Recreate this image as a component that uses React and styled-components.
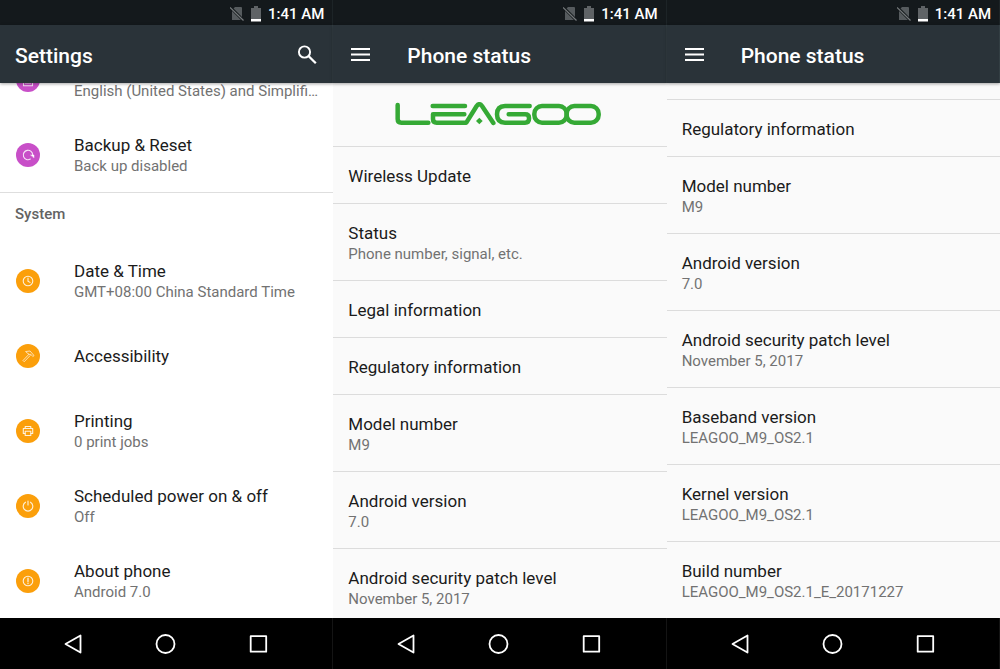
import React from "react";
import styled, { createGlobalStyle } from "styled-components";

const GlobalStyle = createGlobalStyle`
  * { box-sizing: border-box; }
  body {
    margin: 0;
    background: #000;
    font-family: Roboto, "Liberation Sans", sans-serif;
  }
  button {
    font: inherit;
    color: inherit;
    border: 0;
    padding: 0;
    background: none;
    cursor: pointer;
  }
`;

const Screens = styled.main`
  display: grid;
  grid-template-columns: repeat(3, minmax(0, 1fr));
  height: 100vh;
`;

const Phone = styled.section`
  display: flex;
  flex-direction: column;
  min-width: 0;
  min-height: 0;
  background: ${(p) => p.$surface};
`;

const StatusBar = styled.div`
  display: flex;
  flex: none;
  align-items: center;
  justify-content: flex-end;
  height: 25px;
  padding: 2px 8px 0 0;
  background: #14191c;
  border-right: 1px solid #1d2427;
  color: #fff;
  font-size: 15px;
  font-weight: 500;
  line-height: 20px;

  svg { margin-right: 7px; }
`;

const AppBar = styled.header`
  position: relative;
  display: flex;
  flex: none;
  align-items: center;
  height: 58px;
  padding: 2px 15px 0;
  background: #2a3339;
  border-right: 1px solid #333e43;
  box-shadow: 0 1px 3px rgba(0, 0, 0, 0.35);
  color: #fff;
`;

const Title = styled.h1`
  flex: 1;
  margin: 0;
  padding-top: 2px;
  font-size: 21px;
  font-weight: 500;
  line-height: 24px;
`;

const BarButton = styled.button`
  display: flex;
  margin-right: ${(p) => (p.$lead ? "32px" : "0")};
`;

const List = styled.div`
  flex: 1;
  min-height: 0;
  overflow: hidden;
`;

const SettingRow = styled.button`
  display: flex;
  align-items: center;
  width: 100%;
  height: 75px;
  margin-top: ${(p) => (p.$scrolled ? "-41px" : "0")};
  padding: 0 8px 0 16px;
  text-align: left;
`;

const RowIcon = styled.span`
  display: flex;
  flex: none;
  align-items: center;
  justify-content: center;
  width: 24px;
  height: 24px;
  margin-right: 34px;
  border-radius: 50%;
  background: ${(p) => p.$color};
`;

const RowText = styled.span`
  display: block;
  min-width: 0;
  padding-top: ${(p) => (p.$subtitleOnly ? "22px" : "0")};
`;

const RowTitle = styled.span`
  display: block;
  color: #1b1b1b;
  font-size: 17px;
  line-height: 22px;
`;

const RowSubtitle = styled.span`
  display: block;
  color: #727272;
  font-size: 15px;
  line-height: 20px;
`;

const SectionTitle = styled.h2`
  margin: 0;
  padding: 11px 15px 19px;
  border-top: 1px solid #dedede;
  color: #636363;
  font-size: 15px;
  font-weight: 500;
  line-height: 20px;
`;

const InfoRow = styled.button`
  display: block;
  width: 100%;
  padding: 18px 15px 16px;
  border-bottom: 1px solid #dcdcdc;
  text-align: left;
`;

const Banner = styled.div`
  display: flex;
  justify-content: center;
  height: 64px;
  padding: 19px 3px 0 0;
  border-bottom: 1px solid #dcdcdc;
`;

const ListEdge = styled.div`
  height: 17px;
  border-bottom: 1px solid #dcdcdc;
`;

const NavBar = styled.nav`
  display: flex;
  flex: none;
  align-items: center;
  justify-content: center;
  gap: 69px;
  height: 51px;
  background: #000;
  border-right: 1px solid #141414;
`;

const NavButton = styled.button`
  display: flex;
`;

const glyph = {
  fill: "none",
  stroke: "#fff",
  strokeLinecap: "round",
  strokeLinejoin: "round",
};

function SystemStatus() {
  return (
    <StatusBar>
      <svg width="14" height="16" viewBox="0 0 14 16" aria-label="No SIM">
        <path d="M5 1h6q1 0 1 1v12h-10V4z" fill="#565b5e" />
        <path d="M0 1l14 14" stroke="#14191c" strokeWidth="3" />
        <path d="M0 1.500l13.500 13" stroke="#777b7d" strokeWidth="1.200" />
      </svg>
      <svg width="10" height="16" viewBox="0 0 10 16" aria-label="Battery low">
        <path d="M3 0h4v2h3v11H0V2h3z" fill="#5f6366" />
        <path d="M0 13h10v2.500H0z" fill="#fff" />
      </svg>
      <span>1:41 AM</span>
    </StatusBar>
  );
}

function MenuButton() {
  return (
    <BarButton $lead aria-label="Menu">
      <svg width="27" height="20" viewBox="0 0 27 20">
        <path d="M3 4h19M3 9.500h19M3 15h19" stroke="#fff" strokeWidth="2.200" />
      </svg>
    </BarButton>
  );
}

function Navigation() {
  return (
    <NavBar aria-label="System navigation">
      <NavButton aria-label="Back">
        <svg width="24" height="24" viewBox="0 0 24 24" {...glyph} strokeWidth="1.800">
          <path d="M19.500 3.500v17L4.500 12z" />
        </svg>
      </NavButton>
      <NavButton aria-label="Home">
        <svg width="24" height="24" viewBox="0 0 24 24" {...glyph} strokeWidth="1.800">
          <circle cx="11.500" cy="12" r="9" />
        </svg>
      </NavButton>
      <NavButton aria-label="Recent apps">
        <svg width="24" height="24" viewBox="0 0 24 24" {...glyph} strokeWidth="1.800">
          <path d="M3.700 4.200h15.500v15.500H3.700z" />
        </svg>
      </NavButton>
    </NavBar>
  );
}

const icons = {
  language: <path d="M2.500 2h9v10.800h-9zM4.500 10h5" />,
  backup: (
    <>
      <path d="M9.300 11.100A4.700 4.700 0 1 1 11.700 7" />
      <path d="M9.800 7h3.200v2.600z" fill="#fff" strokeWidth="0.500" />
    </>
  ),
  clock: (
    <>
      <circle cx="7" cy="7" r="4.800" />
      <path d="M7 4v3.200l2 1.200" />
    </>
  ),
  hammer: (
    <>
      <path d="M5 2.500l4-.5 4 4.500-1.200 1-2-2.200-1.300.2-2.500-1.600z" strokeWidth="0.800" />
      <path d="M8 5.200l-6 6.300 1.200 1.200 6-6.200" strokeWidth="0.800" />
    </>
  ),
  printer: (
    <>
      <path d="M4.200 4.500v-2h5.600v2M4 9.500H2.300v-5h9.400v5H10" />
      <path d="M4.200 7.300h5.600v4.200H4.200z" />
    </>
  ),
  power: (
    <>
      <path d="M4.500 3.200a4.800 4.800 0 1 0 5 0" />
      <path d="M7 2v4" />
    </>
  ),
  info: (
    <>
      <circle cx="7" cy="7" r="4.800" />
      <path d="M7 4.200v3.400M7 9.200v.4" strokeWidth="1.300" />
    </>
  ),
};

function Setting({ icon, color = "#fb9f0b", title, subtitle, scrolled }) {
  return (
    <SettingRow $scrolled={scrolled}>
      <RowIcon $color={color}>
        <svg width="14" height="14" viewBox="0 0 14 14" {...glyph} strokeOpacity="0.850" strokeWidth="1.100">
          {icons[icon]}
        </svg>
      </RowIcon>
      <RowText $subtitleOnly={!title}>
        {title && <RowTitle>{title}</RowTitle>}
        {subtitle && <RowSubtitle>{subtitle}</RowSubtitle>}
      </RowText>
    </SettingRow>
  );
}

function Info({ title, subtitle }) {
  return (
    <InfoRow>
      <RowTitle>{title}</RowTitle>
      {subtitle && <RowSubtitle>{subtitle}</RowSubtitle>}
    </InfoRow>
  );
}

function Logo() {
  return (
    <svg
      width="207"
      height="24"
      viewBox="44 51 621 72"
      fill="none"
      stroke="#35a935"
      strokeWidth="13.500"
      strokeLinecap="round"
      strokeLinejoin="round"
      role="img"
      aria-label="LEAGOO"
    >
      <path d="M52 60v42q0 11 11 11h81" />
      <path d="M157 63h97M252 88h-94v14q0 11 11 11h89l31-50q8-11 16 0l34 51" />
      <path d="M297 98l10 10-10 10-10-10z" fill="#35a935" stroke="none" />
      <path d="M448 63h-74q-24 0-24 25t24 25h60q12 0 12-12v-2q0-11-12-11h-49" />
      <rect x="462" y="63" width="97" height="50" rx="23" />
      <rect x="559" y="63" width="96" height="50" rx="23" />
    </svg>
  );
}

export default function App() {
  return (
    <>
      <GlobalStyle />
      <Screens>
        <Phone $surface="#ffffff">
          <SystemStatus />
          <AppBar>
            <Title>Settings</Title>
            <BarButton aria-label="Search">
              <svg width="20" height="20" viewBox="0 0 20 20" {...glyph} strokeLinecap="butt">
                <circle cx="7.500" cy="7" r="5.600" strokeWidth="1.900" />
                <path d="M11.500 11l7.300 7.300" strokeWidth="2.300" />
              </svg>
            </BarButton>
          </AppBar>
          <List>
            <Setting scrolled icon="language" color="#c84fc8" subtitle="English (United States) and Simplifi…" />
            <Setting icon="backup" color="#c84fc8" title="Backup & Reset" subtitle="Back up disabled" />
            <SectionTitle>System</SectionTitle>
            <Setting icon="clock" title="Date & Time" subtitle="GMT+08:00 China Standard Time" />
            <Setting icon="hammer" title="Accessibility" />
            <Setting icon="printer" title="Printing" subtitle="0 print jobs" />
            <Setting icon="power" title="Scheduled power on & off" subtitle="Off" />
            <Setting icon="info" title="About phone" subtitle="Android 7.0" />
          </List>
          <Navigation />
        </Phone>

        <Phone $surface="#fafafa">
          <SystemStatus />
          <AppBar>
            <MenuButton />
            <Title>Phone status</Title>
          </AppBar>
          <List>
            <Banner>
              <Logo />
            </Banner>
            <Info title="Wireless Update" />
            <Info title="Status" subtitle="Phone number, signal, etc." />
            <Info title="Legal information" />
            <Info title="Regulatory information" />
            <Info title="Model number" subtitle="M9" />
            <Info title="Android version" subtitle="7.0" />
            <Info title="Android security patch level" subtitle="November 5, 2017" />
          </List>
          <Navigation />
        </Phone>

        <Phone $surface="#fafafa">
          <SystemStatus />
          <AppBar>
            <MenuButton />
            <Title>Phone status</Title>
          </AppBar>
          <List>
            <ListEdge />
            <Info title="Regulatory information" />
            <Info title="Model number" subtitle="M9" />
            <Info title="Android version" subtitle="7.0" />
            <Info title="Android security patch level" subtitle="November 5, 2017" />
            <Info title="Baseband version" subtitle="LEAGOO_M9_OS2.1" />
            <Info title="Kernel version" subtitle="LEAGOO_M9_OS2.1" />
            <Info title="Build number" subtitle="LEAGOO_M9_OS2.1_E_20171227" />
          </List>
          <Navigation />
        </Phone>
      </Screens>
    </>
  );
}
